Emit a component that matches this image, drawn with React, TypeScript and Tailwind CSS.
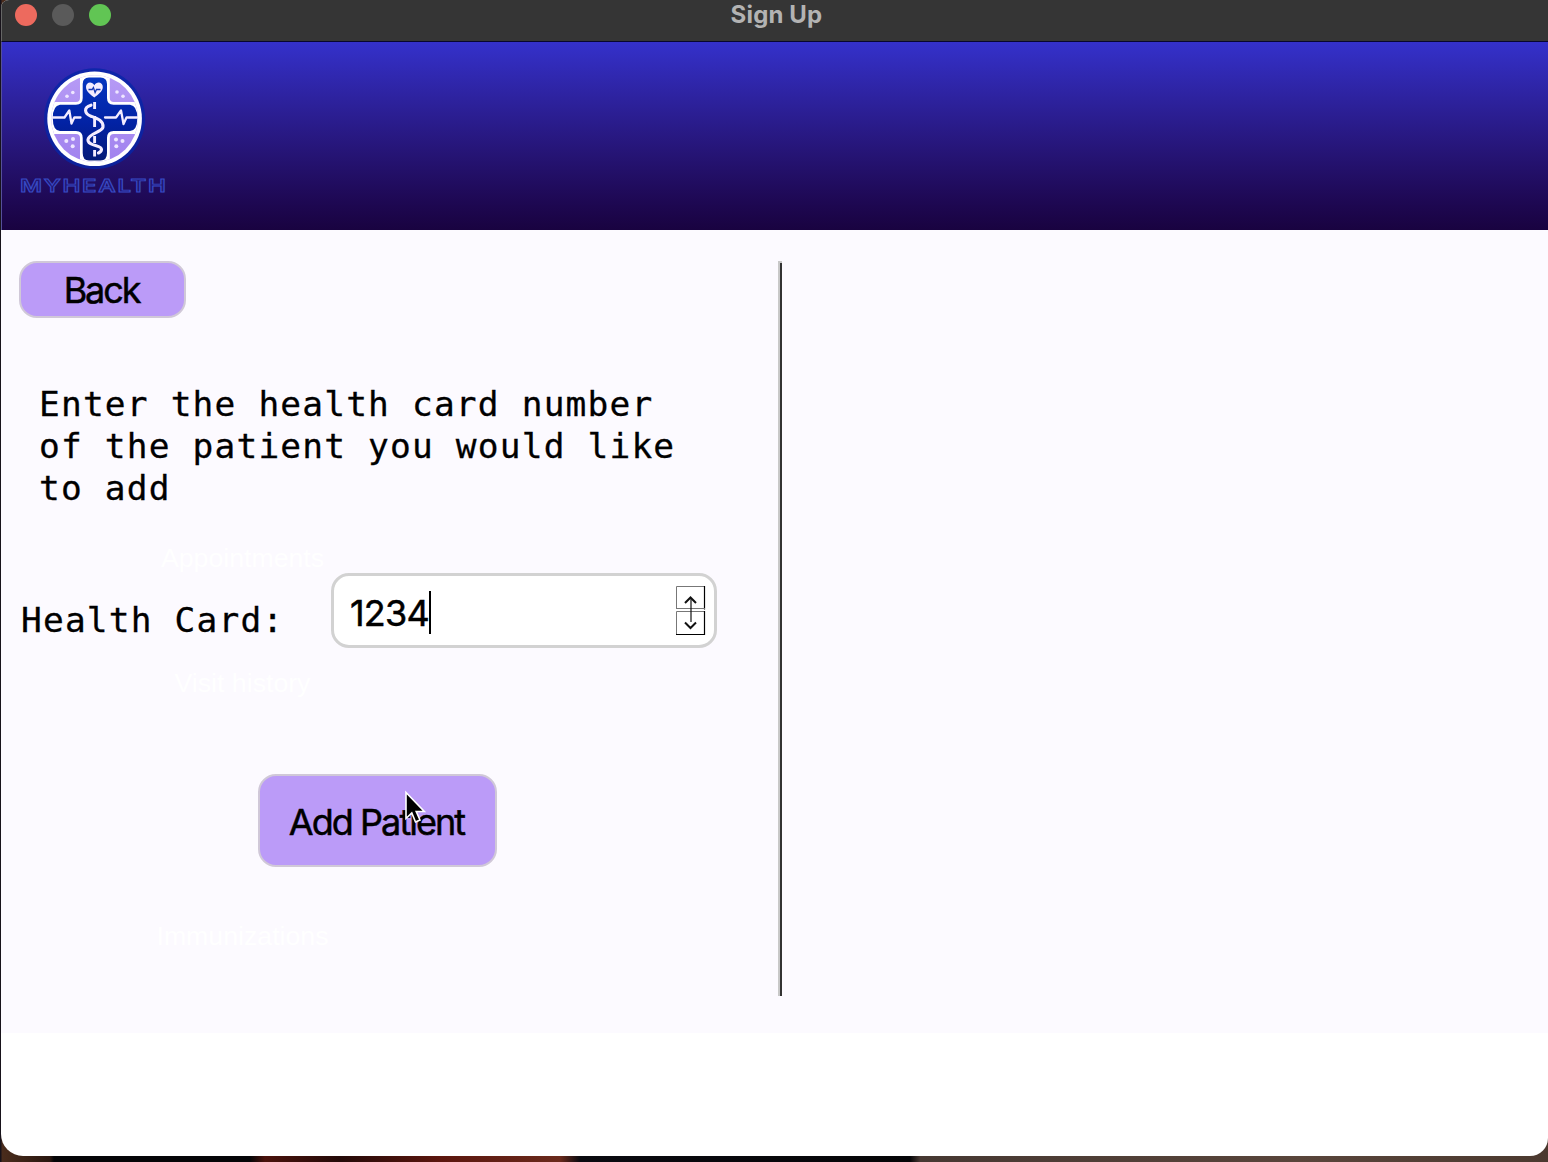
function Logo() {
  return (
    <svg width="160" height="140" viewBox="-25 0 160 140" className="block">
      <defs>
        <clipPath id="disc">
          <circle cx="54.6" cy="56.7" r="43.4" />
        </clipPath>
        <linearGradient id="lilac" x1="0" y1="0" x2="0" y2="1">
          <stop offset="0" stopColor="#b89df6" />
          <stop offset="1" stopColor="#a081ee" />
        </linearGradient>
        <linearGradient id="navy" x1="0" y1="0" x2="0" y2="1">
          <stop offset="0" stopColor="#0536c0" />
          <stop offset="0.55" stopColor="#0222a4" />
          <stop offset="1" stopColor="#041a78" />
        </linearGradient>
      </defs>
      <circle cx="54.6" cy="56.7" r="50.5" fill="#0626a8" opacity="0.8" />
      <circle cx="54.6" cy="56.7" r="47.3" fill="#fff" />
      <g clipPath="url(#disc)">
        <rect x="5" y="5" width="100" height="100" fill="url(#lilac)" />
        <path d="M40 0V36Q40 40 36 40H0V72H36Q40 72 40 76V110H69.8V76Q69.8 72 73.8 72H110V40H73.8Q69.8 40 69.8 36V0Z" fill="#fff" />
      </g>
      <path d="M49 15.5H60.5Q67 15.5 67 22V36Q67 42.7 73.5 42.7H90Q97.3 43.5 97.3 56Q97.3 68.5 90 69H73.5Q67 69 67 76V91Q67 98.5 60.5 98.5H49Q42.7 98.5 42.7 91V76Q42.7 69 36 69H20Q12.8 68.5 12.8 56Q12.8 43.5 20 42.7H36Q42.7 42.7 42.7 36V22Q42.7 15.5 49 15.5Z" fill="url(#navy)" />
      <path d="M54.3 35.5C51 33 46 29.5 46 25C46 19.8 52 19 54.3 23.2C56.6 19 62.8 19.8 62.8 25C62.8 29.5 57.5 33 54.3 35.5Z" fill="#f3ecff" />
      <path d="M48.5 27.5h3.7l1.2-2 1.7 5 1.4-3h4" fill="none" stroke="#1538b5" strokeWidth="1.3" />
      <g fill="none" stroke="#f3ecff" strokeLinecap="round" strokeLinejoin="round">
        <path d="M12.8 55.5H24.5L29.3 48.5L31.5 61.5L34.3 55.5H40.5M65 55.5H76L81 48.5L83.5 62L86.5 55.5H97" strokeWidth="2.3" />
        <path d="M54.6 40V47M54.6 54V65M54.6 74V81M54.6 88V94.5" strokeWidth="2.9" strokeLinecap="butt" />
        <path d="M51 43.2C43 45.5 44.5 51.7 51 54.2C57 56.5 63.5 58.5 63 65C62.5 70 49 71.5 48 77.5C47.3 84.5 62 82.5 61.5 87.5C61.3 89.5 60 90.3 58.5 91" strokeWidth="3.1" />
      </g>
      <g fill="#eee6ff">
        <circle cx="32.8" cy="30.5" r="1.8" /><circle cx="27" cy="34.2" r="1.8" />
        <circle cx="77" cy="30" r="1.8" /><circle cx="83" cy="34.3" r="1.8" />
        <circle cx="26.3" cy="79" r="2" /><circle cx="33" cy="77" r="2" /><circle cx="32.7" cy="84.3" r="2" />
        <circle cx="76" cy="77.5" r="2" /><circle cx="82.5" cy="79" r="2" /><circle cx="76.3" cy="84.3" r="2" />
      </g>
      <text x="-20" y="130" fontSize="17" fontWeight="600" letterSpacing="1.2" textLength="147.5" lengthAdjust="spacingAndGlyphs" className="font-['Inter',sans-serif]" fill="#211672" stroke="#384bc4" strokeWidth="0.9">
        MYHEALTH
      </text>
    </svg>
  );
}

function Spinner() {
  return (
    <svg width="30" height="50" viewBox="0 0 30 50" className="block" fill="none">
      <path d="M.5 23V.5H29" stroke="#777" />
      <path d="M28.5 0V23.5" stroke="#000" strokeWidth="1.2" />
      <path d="M0 22.5H29" stroke="#777" />
      <path d="M.5 48.5V25.5H29" stroke="#777" />
      <path d="M28.5 25V49M0 48.5H29" stroke="#000" strokeWidth="1.2" />
      <path d="M15 12V36" stroke="#111" strokeWidth="1.2" />
      <path d="M9 17L14.5 11.5L20 17M9 36.5L14.5 42L20 36.5" stroke="#111" strokeWidth="2" />
    </svg>
  );
}

function Pointer() {
  return (
    <svg width="24" height="36" viewBox="0 0 24 36" className="absolute left-[144px] top-[14px]">
      <path d="M2 2.5V28.5L7.8 23L11.5 32L16 30L12.2 21.5H20.3Z" fill="#000" stroke="#fff" strokeWidth="1.6" />
    </svg>
  );
}

const mono = "font-['DejaVu_Sans_Mono',monospace] text-[34.5px] leading-[42px] tracking-[1.17px] [-webkit-text-stroke:0.3px_black]";
const sans = "font-['Inter',sans-serif] text-[36px] [-webkit-text-stroke:0.5px_black]";
const ghost = "font-['Liberation_Sans',sans-serif] text-white text-[26.7px] leading-[30px] whitespace-nowrap text-center w-[483px]";

export default function App() {
  return (
    <div className="flex h-[1162px] w-[1548px] flex-col overflow-hidden bg-[linear-gradient(90deg,#17121a_0,#17121a_1px,#4a2c1c_2px,#2a1710_50px,#050507_54px,#050507_250px,#4a120c_265px,#240a08_340px,#5c160e_440px,#6a2a1c_560px,#0a0a10_580px,#050507_910px,#463832_920px,#59453b_1300px,#4b392f_1548px)] text-black">
      <div className="ml-px flex h-[1156px] flex-col overflow-hidden rounded-bl-[22px] rounded-br-[18px] rounded-tl-[8px] bg-white">
        <header className="grid h-[42px] shrink-0 grid-cols-[1fr_auto_1fr] border-b border-l border-b-[#070730] border-l-[#666] bg-[#353535]">
          <div className="flex gap-[15px] pl-[13px] pt-1">
            <span className="size-[22px] rounded-full bg-[#ed6a5e]" />
            <span className="size-[22px] rounded-full bg-[#5a5a5a]" />
            <span className="size-[22px] rounded-full bg-[#61c554]" />
          </div>
          <h1 className="pl-[3px] font-['Inter',sans-serif] text-[24px] font-bold leading-[30px] tracking-[0.15px] text-[#b3b3b3]">Sign Up</h1>
        </header>
        <div className="h-[188px] shrink-0 border-l border-[#55509a] bg-linear-to-b from-[#3431cb] to-[#190340] pl-[13px] pt-5">
          <Logo />
        </div>
        <main className="flex h-[803px] shrink-0 bg-[#fcfaff]">
          <section className="w-[777px] pt-[31px]">
            <button className={`${sans} ml-[18px] block h-[57px] w-[167px] rounded-[18px] border-2 border-[#d0c8d8] bg-[#bb9bf8] pr-0.5 pt-px leading-[53px] tracking-[-2.1px]`}>
              Back
            </button>
            <p className={`${mono} ml-[38px] mt-[65px] whitespace-pre`}>
              {"Enter the health card number\nof the patient you would like\nto add"}
            </p>
            <div className={`${ghost} mt-[34px]`}>Appointments</div>
            <div className="flex h-[75px]">
              <label className={`${mono} ml-[20px] mt-[26px] w-[310px]`}>Health Card:</label>
              <div className="flex h-[75px] w-[386px] justify-between rounded-[18px] border-[3px] border-[#d2d2d2] bg-white pl-4 pr-[8px]">
                <div className="flex pt-[14px]">
                  <span className={`${sans} leading-[47px] tracking-[-0.8px]`}>1234</span>
                  <span className="mt-px h-[43px] w-[2px] bg-black" />
                </div>
                <div className="pt-[10px]"><Spinner /></div>
              </div>
            </div>
            <div className={`${ghost} mt-[20px]`}>Visit history</div>
            <button className={`${sans} relative ml-[257px] mt-[76px] block h-[93px] w-[239px] rounded-[18px] border-2 border-[#d0c8d8] bg-[#bb9bf8] pr-0.5 pt-0.5 tracking-[-1.95px]`}>
              Add Patient
              <Pointer />
            </button>
            <div className={`${ghost} mt-[54px]`}>Immunizations</div>
          </section>
          <div className="mt-[31px] h-[735px] w-[4px] border-l-2 border-t-2 border-[#c8c8c8] bg-[#333]" />
        </main>
      </div>
    </div>
  );
}
